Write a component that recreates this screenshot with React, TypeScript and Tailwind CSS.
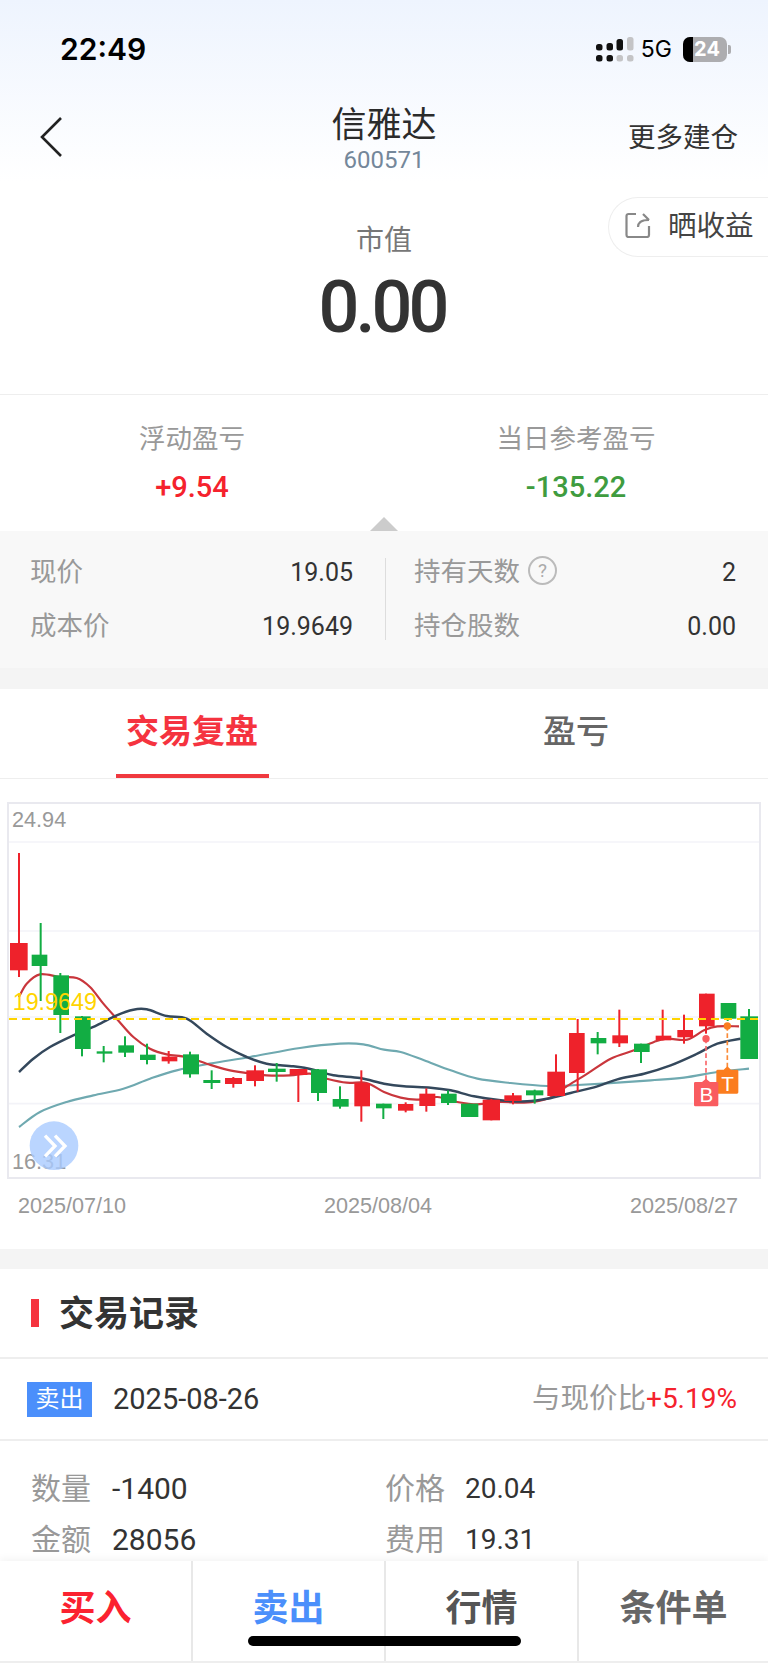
import React from 'react';

// [center x, wick top, wick bottom, body top, body bottom, body left, body right, up?]
// units: 3x page pixels, measured from the chart crop
const candles: [number, number, number, number, number, number, number, boolean][] = [
  [57, 218, 590, 488, 570, 30, 83, true],
  [122, 428, 662, 523, 557, 95, 142, false],
  [181, 578, 758, 585, 704, 160, 207, false],
  [246, 707, 828, 708, 806, 225, 272, false],
  [311, 797, 846, 813, 820, 290, 337, false],
  [375, 768, 830, 795, 817, 355, 402, false],
  [441, 790, 852, 823, 839, 420, 467, false],
  [506, 812, 850, 829, 843, 485, 532, true],
  [570, 814, 892, 822, 882, 549, 597, false],
  [635, 870, 926, 899, 908, 610, 661, false],
  [700, 890, 922, 893, 911, 675, 726, true],
  [765, 855, 918, 870, 902, 739, 792, true],
  [830, 848, 904, 865, 875, 804, 857, false],
  [895, 866, 965, 866, 884, 869, 922, true],
  [954, 866, 962, 867, 938, 933, 981, false],
  [1020, 918, 985, 956, 979, 998, 1046, false],
  [1084, 870, 1024, 908, 978, 1063, 1110, true],
  [1150, 970, 1016, 970, 984, 1128, 1175, false],
  [1217, 966, 996, 971, 991, 1194, 1240, true],
  [1279, 924, 994, 940, 977, 1258, 1306, true],
  [1344, 930, 974, 940, 968, 1323, 1370, false],
  [1409, 970, 1010, 970, 1010, 1383, 1435, false],
  [1474, 956, 1020, 958, 1020, 1448, 1500, true],
  [1539, 938, 972, 945, 962, 1513, 1565, true],
  [1604, 928, 970, 930, 945, 1578, 1630, false],
  [1668, 822, 948, 874, 947, 1642, 1695, true],
  [1733, 716, 934, 758, 878, 1707, 1754, true],
  [1793, 755, 822, 773, 789, 1772, 1819, false],
  [1858, 688, 800, 765, 789, 1837, 1884, true],
  [1923, 790, 848, 790, 815, 1902, 1949, false],
  [1988, 688, 780, 766, 780, 1967, 2014, true],
  [2052, 703, 790, 749, 771, 2032, 2079, true],
  [2118, 640, 760, 640, 738, 2097, 2144, true],
  [2183, 668, 722, 668, 715, 2162, 2209, false],
  [2247, 686, 836, 708, 836, 2221, 2274, false],
];

const shift = (pts: number[][]) => pts.map(([x, y]) => [x + 1152, y]);

const redLine = [
  [57, 650], [80, 610], [120, 582], [180, 590], [230, 593], [270, 620], [310, 670], [350, 715], [400, 770],
  [450, 805], [500, 822], [560, 830], [620, 850], [680, 868], [740, 878], [800, 885], [870, 885], [930, 880],
  [980, 895], [1040, 907], [1100, 908], [1152, 935],
  ...shift([
    [50, 952], [100, 958], [160, 950], [220, 965], [280, 972], [350, 965], [420, 967], [490, 955], [545, 920],
    [610, 880], [680, 835], [750, 810], [810, 785], [850, 775], [910, 778], [960, 750], [1000, 738], [1065, 738],
  ]),
];

const darkLine = [
  [57, 875], [100, 835], [150, 800], [220, 765], [290, 735], [350, 705], [400, 688], [440, 687], [500, 707],
  [560, 715], [620, 760], [680, 800], [740, 830], [800, 850], [880, 858], [940, 868], [1000, 885], [1080, 893],
  [1152, 910],
  ...shift([
    [60, 918], [140, 922], [200, 930], [270, 948], [350, 960], [430, 963], [490, 955], [560, 938], [640, 918],
    [700, 897], [780, 880], [860, 855], [940, 820], [1000, 790], [1070, 775],
  ]),
];

const tealLine = [
  [57, 1040], [120, 995], [200, 965], [280, 945], [370, 925], [450, 895], [530, 870], [630, 850], [750, 830],
  [900, 803], [1020, 790], [1090, 792], [1152, 808],
  ...shift([
    [50, 815], [120, 840], [200, 870], [280, 895], [380, 908], [490, 917], [580, 914], [700, 907], [800, 900],
    [900, 892], [1000, 875], [1095, 865],
  ]),
];

// catmull-rom through the measured points
function smooth(pts: number[][]) {
  let d = `M${pts[0][0]},${pts[0][1]}`;
  for (let i = 0; i < pts.length - 1; i++) {
    const p0 = pts[i - 1] || pts[i];
    const p1 = pts[i];
    const p2 = pts[i + 1];
    const p3 = pts[i + 2] || p2;
    const c1x = p1[0] + (p2[0] - p0[0]) / 6;
    const c1y = p1[1] + (p2[1] - p0[1]) / 6;
    const c2x = p2[0] - (p3[0] - p1[0]) / 6;
    const c2y = p2[1] - (p3[1] - p1[1]) / 6;
    d += ` C${c1x},${c1y} ${c2x},${c2y} ${p2[0]},${p2[1]}`;
  }
  return d;
}

const Chart: React.FC = () => (
  <div className="ml-[7px] w-[754px] h-[377px] border-2 border-[#e9e9ef] bg-white">
    <svg className="block w-[750px] h-[373px]" viewBox="27 71 2250 1119">
      {[185, 452, 710, 970].map((y) => (
        <line key={y} x1="27" x2="2277" y1={y} y2={y} stroke="#f3f3f8" strokeWidth="5" />
      ))}
      <text x="36" y="141" fontSize="65" fill="#999999" fontFamily="Liberation Sans">24.94</text>
      <text x="36" y="1166" fontSize="65" fill="#999999" fontFamily="Liberation Sans">16.31</text>
      <path d={smooth(tealLine)} fill="none" stroke="#6fa9b0" strokeWidth="6.5" />
      <path d={smooth(redLine)} fill="none" stroke="#c9363c" strokeWidth="6.5" />
      <path d={smooth(darkLine)} fill="none" stroke="#34485c" strokeWidth="7.5" />
      {candles.map(([cx, wt, wb, bt, bb, bl, br, up]) => (
        <g key={cx} fill={up ? '#ee222b' : '#12ad43'}>
          <rect x={cx - 3} y={wt} width="6" height={wb - wt} />
          <rect x={bl} y={bt} width={br - bl} height={bb - bt} />
        </g>
      ))}
      <line x1="27" x2="2277" y1="716" y2="716" stroke="#ffd400" strokeWidth="6" strokeDasharray="24 15" />
      <text x="38" y="690" fontSize="70" fill="#ffd400" fontFamily="Liberation Sans">19.9649</text>

      <line x1="2118" x2="2118" y1="775" y2="900" stroke="#f9686b" strokeWidth="5" strokeDasharray="14 8" />
      <circle cx="2118" cy="775" r="11" fill="#f95c60" />
      <line x1="2182" x2="2182" y1="737" y2="865" stroke="#fb8a36" strokeWidth="5" strokeDasharray="14 8" />
      <circle cx="2182" cy="737" r="11" fill="#fb7d1f" />
      <path d="M2153,868 h18 l11,-10 l11,10 h18 a4,4 0 0 1 4,4 v64 a4,4 0 0 1 -4,4 h-58 a4,4 0 0 1 -4,-4 v-64 a4,4 0 0 1 4,-4 z" fill="#fb7d1f" />
      <text x="2183" y="932" fontSize="62" fill="#ffffff" textAnchor="middle" fontFamily="Liberation Sans">T</text>
      <path d="M2086,905 h20 l12,-10 l12,10 h21 a4,4 0 0 1 4,4 v65 a4,4 0 0 1 -4,4 h-65 a4,4 0 0 1 -4,-4 v-65 a4,4 0 0 1 4,-4 z" fill="#f95c60" />
      <text x="2119" y="966" fontSize="62" fill="#ffffff" textAnchor="middle" fontFamily="Liberation Sans">B</text>

      <circle cx="162" cy="1096" r="73" fill="#a9cbff" fillOpacity="0.8" />
      <path d="M135,1066 L165,1097 L135,1128 M165,1066 L195,1097 L165,1128" fill="none" stroke="#ffffff" strokeWidth="10" />
    </svg>
  </div>
);

const StatusBar: React.FC = () => (
  <div className="h-[98px] flex items-center justify-between pl-[60px] pr-[37px]">
    <span className="font-['Inter',sans-serif] font-semibold text-[30px] leading-none text-black">22:49</span>
    <div className="flex items-center">
      <svg width="38" height="26" viewBox="0 0 38 26" className="mr-[7px]">
        <g fill="#111111">
          <rect x="0" y="8" width="6.5" height="6.5" rx="2.5" />
          <rect x="10.5" y="7" width="6.5" height="7.5" rx="2.5" />
          <rect x="20.5" y="3" width="6.5" height="11.5" rx="2.5" />
          <rect x="0" y="19" width="6.5" height="6.5" rx="2.5" />
          <rect x="10.5" y="19" width="6.5" height="6.5" rx="2.5" />
        </g>
        <g fill="#c4c4c6">
          <rect x="31" y="1" width="6.5" height="13.5" rx="2.5" />
          <rect x="20.5" y="19" width="6.5" height="6.5" rx="2.5" />
          <rect x="31" y="19" width="6.5" height="6.5" rx="2.5" />
        </g>
      </svg>
      <span className="font-['Inter',sans-serif] text-[23px] leading-none text-black mr-[11px]">5G</span>
      <div className="relative w-[44px] h-[25px] rounded-[7px] bg-[#adadb0] overflow-hidden flex items-center justify-center">
        <div className="absolute left-0 top-0 bottom-0 w-[10px] bg-black" />
        <span className="relative font-['Inter',sans-serif] font-bold text-[20px] leading-none text-white pl-[4px]">24</span>
      </div>
      <div className="w-[3px] h-[9px] rounded-r-[2px] bg-[#adadb0] ml-[1px]" />
    </div>
  </div>
);

const Header: React.FC = () => (
  <div className="relative h-[395px] bg-gradient-to-b from-[#eef4fe] to-white to-[46%] border-b border-[#eeeeee]">
    <StatusBar />
    <div className="h-[78px] grid grid-cols-[1fr_auto_1fr] items-start">
      <div className="pl-[38px] pt-[18px]">
        <svg width="26" height="42" viewBox="0 0 26 42">
          <path d="M23,2 L4,21 L23,40" fill="none" stroke="#222222" strokeWidth="2.6" />
        </svg>
      </div>
      <div className="flex flex-col items-center pt-[1px]">
        <span className="text-[35px] leading-[54px] text-[#2b2b2b]">信雅达</span>
        <span className="text-[24px] leading-[24px] -mt-[5px] text-[#74879a]">600571</span>
      </div>
      <div className="text-right pr-[30px] pt-[21px] text-[27.5px] leading-[38px] text-[#333333]">更多建仓</div>
    </div>
    <div className="flex flex-col items-center pt-[45px]">
      <span className="text-[28px] leading-[40px] text-[#777777]">市值</span>
      <span className="mt-[2px] -ml-[4px] text-[72px] leading-[90px] font-medium tracking-[-4px] text-[#333333]">0.00</span>
    </div>
    <div className="absolute right-0 top-[197px] w-[160px] h-[60px] rounded-l-[30px] border border-r-0 border-[#eeeeee] bg-white flex items-center pl-[16px]">
      <svg width="26" height="26" viewBox="0 0 26 26" className="mr-[17px] -mt-[4px]">
        <path d="M11,2 H3.5 a2,2 0 0 0 -2,2 V23 a2,2 0 0 0 2,2 H22 a2,2 0 0 0 2,-2 V14 M13,15 C13,11 15,8 24,8 M18,2 L24,8" fill="none" stroke="#888888" strokeWidth="2.2" />
      </svg>
      <span className="text-[28.5px] leading-none text-[#444444]">晒收益</span>
    </div>
  </div>
);

const Stat: React.FC<{ label: string; value: string; color: string }> = ({ label, value, color }) => (
  <div className="flex flex-col items-center pt-[26px]">
    <span className="text-[26.5px] leading-[36px] text-[#999999]">{label}</span>
    <span className={`mt-[12px] text-[29px] leading-[36px] font-medium ${color}`}>{value}</span>
  </div>
);

const Row: React.FC<{ label: string; value: string; help?: boolean }> = ({ label, value, help }) => (
  <div className="h-[54px] flex items-center justify-between">
    <div className="flex items-center">
      <span className="text-[26.5px] leading-none text-[#999999]">{label}</span>
      {help && (
        <span className="ml-[8px] -mt-[3px] w-[29px] h-[29px] rounded-full border-2 border-[#bbbbbb] flex items-center justify-center text-[19px] leading-none text-[#aaaaaa]">?</span>
      )}
    </div>
    <span className="text-[25px] leading-none text-[#333333]">{value}</span>
  </div>
);

const Summary: React.FC = () => (
  <>
    <div className="relative h-[136px] grid grid-cols-2 bg-white">
      <Stat label="浮动盈亏" value="+9.54" color="text-[#f5222d]" />
      <Stat label="当日参考盈亏" value="-135.22" color="text-[#3f9c3f]" />
      <div className="absolute left-[370px] bottom-0 w-0 h-0 border-x-[14px] border-x-transparent border-b-[14px] border-b-[#cccccc]" />
    </div>
    <div className="h-[137px] bg-[#f8f8f8] flex pt-[14px]">
      <div className="w-[385px] pl-[30px] pr-[32px]">
        <Row label="现价" value="19.05" />
        <Row label="成本价" value="19.9649" />
      </div>
      <div className="w-px h-[82px] mt-[13px] bg-[#dddddd]" />
      <div className="flex-1 pl-[28px] pr-[32px]">
        <Row label="持有天数" value="2" help />
        <Row label="持仓股数" value="0.00" />
      </div>
    </div>
    <div className="h-[21px] bg-[#f4f4f4]" />
  </>
);

const Tabs: React.FC = () => (
  <div className="h-[90px] grid grid-cols-2 border-b border-[#eeeeee] bg-white">
    <div className="flex justify-center">
      <div className="w-[153px] h-[89px] pt-[20px] text-center border-b-4 border-[#f0393f] text-[33px] leading-[46px] font-bold text-[#f5333f] whitespace-nowrap">交易复盘</div>
    </div>
    <div className="pt-[20px] text-center text-[33px] leading-[46px] font-medium text-[#666666]">盈亏</div>
  </div>
);

const Record: React.FC = () => (
  <div className="bg-white">
    <div className="h-[90px] flex items-center pl-[31px] border-b-2 border-[#eeeeee]">
      <div className="w-[8px] h-[28px] bg-[#f5333f]" />
      <span className="ml-[20px] mt-[3px] text-[35px] leading-none font-bold text-[#333333]">交易记录</span>
    </div>
    <div className="h-[82px] flex items-center pl-[27px] pr-[31px] border-b-2 border-[#eeeeee]">
      <div className="w-[65px] h-[35px] bg-[#4b8ffb] flex items-center justify-center text-[24px] leading-none text-white">卖出</div>
      <span className="ml-[21px] text-[29px] leading-none text-[#333333]">2025-08-26</span>
      <span className="ml-auto text-[28.5px] leading-none text-[#999999]">与现价比</span>
      <span className="text-[28px] leading-none text-[#f5222d]">+5.19%</span>
    </div>
    <div className="grid grid-cols-[354px_1fr] pt-[22px] pl-[31px]">
      {[
        ['数量', '-1400', '价格', '20.04'],
        ['金额', '28056', '费用', '19.31'],
      ].map((row) => (
        <React.Fragment key={row[0]}>
          <div className="h-[51px] flex items-center">
            <span className="w-[81px] text-[30px] leading-none text-[#999999]">{row[0]}</span>
            <span className="text-[30px] leading-none text-[#333333]">{row[1]}</span>
          </div>
          <div className="h-[51px] flex items-center">
            <span className="w-[80px] text-[30px] leading-none text-[#999999]">{row[2]}</span>
            <span className="text-[28px] leading-none text-[#333333]">{row[3]}</span>
          </div>
        </React.Fragment>
      ))}
    </div>
  </div>
);

const BottomBar: React.FC = () => (
  <div className="absolute left-0 right-0 bottom-0 h-[102px] bg-white shadow-[0_-2px_8px_rgba(0,0,0,0.05)] grid grid-cols-[191px_193px_193px_1fr] border-b-2 border-[#eeeeee]">
    <div className="flex justify-center pt-[24px] text-[36px] leading-[48px] font-bold text-[#fb2230]">买入</div>
    <div className="flex justify-center pt-[24px] border-l-2 border-[#e8e8e8] text-[36px] leading-[48px] font-bold text-[#4b8ffb]">卖出</div>
    <div className="flex justify-center pt-[24px] border-l-2 border-[#e8e8e8] text-[36px] leading-[48px] font-bold text-[#555555]">行情</div>
    <div className="flex justify-center pt-[24px] border-l-2 border-[#e8e8e8] text-[36px] leading-[48px] font-bold text-[#666666]">条件单</div>
    <div className="absolute left-[248px] top-[75px] w-[273px] h-[10px] rounded-full bg-black" />
  </div>
);

export default function App() {
  return (
    <div className="relative w-[768px] h-[1663px] overflow-hidden bg-white font-['Roboto','Noto_Sans_CJK_SC',sans-serif]">
      <Header />
      <Summary />
      <Tabs />
      <div className="pt-[23px] bg-white">
        <Chart />
        <div className="h-[70px] pt-[15px] flex items-start justify-between pl-[18px] pr-[30px] font-['Liberation_Sans',sans-serif] text-[21.6px] leading-[24px] text-[#999999]">
          <span>2025/07/10</span>
          <span>2025/08/04</span>
          <span>2025/08/27</span>
        </div>
      </div>
      <div className="h-[20px] bg-[#f4f4f4]" />
      <Record />
      <BottomBar />
    </div>
  );
}
